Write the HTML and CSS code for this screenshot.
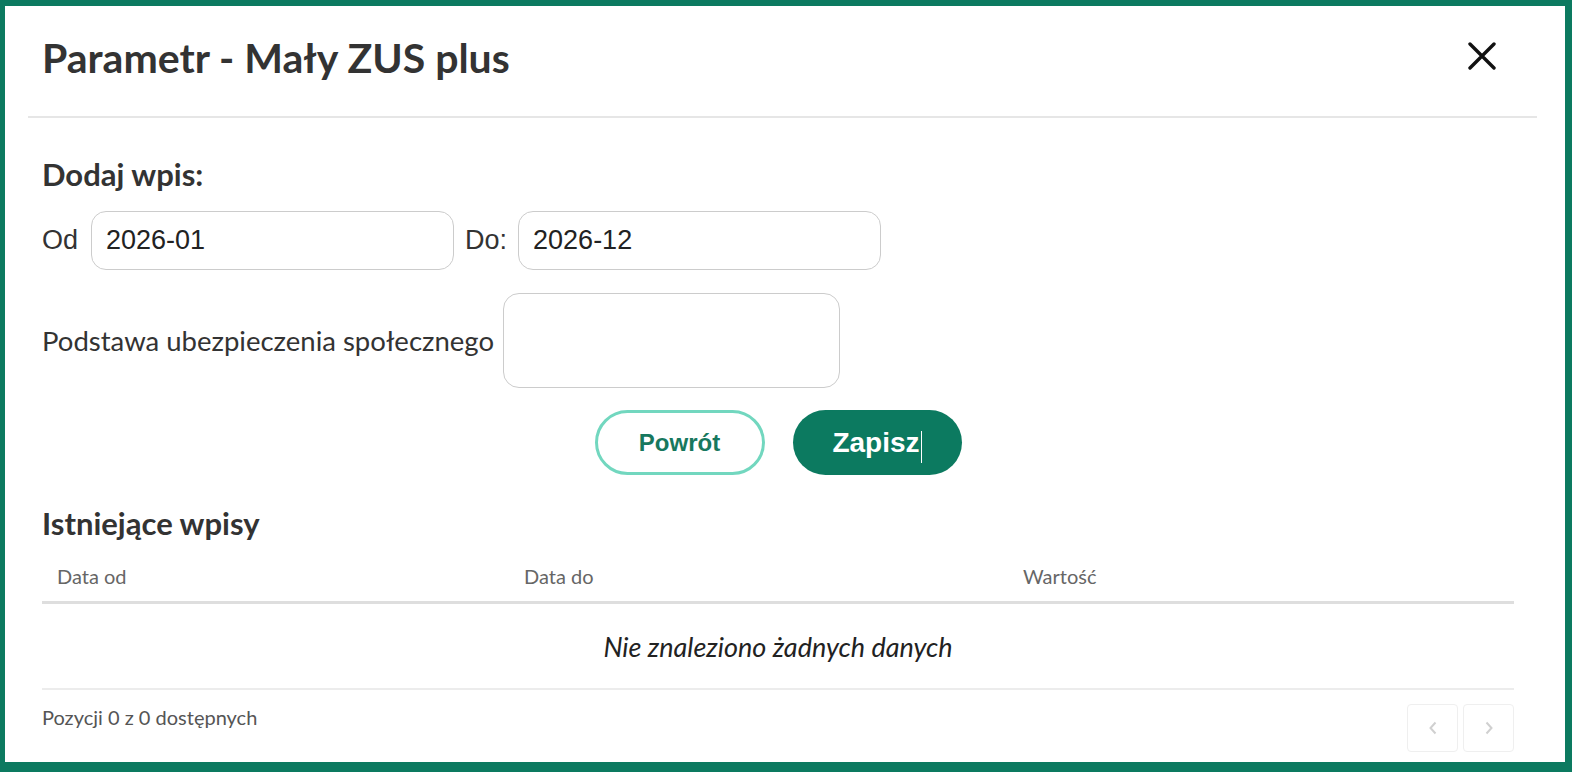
FILE: index.html
```html
<!DOCTYPE html>
<html lang="pl">
<head>
<meta charset="utf-8">
<title>Parametr - Mały ZUS plus</title>
<link rel="stylesheet" href="styles.css">
</head>
<body>
<div class="modal">
  <header class="modal-header">
    <h1 class="modal-title">Parametr - Mały ZUS plus</h1>
    <button class="close" type="button" aria-label="Zamknij">
      <svg width="30" height="28" viewBox="0 0 30 28"><path d="M3 2 L27 26 M27 2 L3 26" stroke="#111" stroke-width="3.4" stroke-linecap="round"/></svg>
    </button>
  </header>
  <div class="modal-body">
    <h2 class="section-title">Dodaj wpis:</h2>
    <div class="row">
      <label class="lbl lbl-first">Od</label>
      <input class="input date" type="text" value="2026-01">
      <label class="lbl">Do:</label>
      <input class="input date" type="text" value="2026-12">
    </div>
    <div class="row row-base">
      <label class="lbl lbl-lato">Podstawa ubezpieczenia społecznego</label>
      <input class="input tall" type="text" value="">
    </div>
    <div class="actions">
      <button class="btn btn-outline" type="button">Powrót</button>
      <button class="btn btn-primary" type="button">Zapisz<span class="caret"></span></button>
    </div>
    <h2 class="section-title existing">Istniejące wpisy</h2>
    <div class="table">
      <div class="thead">
        <div class="th">Data od</div>
        <div class="th">Data do</div>
        <div class="th">Wartość</div>
      </div>
      <div class="empty">Nie znaleziono żadnych danych</div>
    </div>
    <div class="footer">
      <span class="info">Pozycji 0 z 0 dostępnych</span>
      <div class="pager">
        <button class="page" type="button" aria-label="Poprzednia"><svg width="10" height="16" viewBox="0 0 10 16"><path d="M7.5 2.5 L2.5 8 L7.5 13.5" fill="none" stroke="#d0d0d0" stroke-width="2"/></svg></button>
        <button class="page" type="button" aria-label="Następna"><svg width="10" height="16" viewBox="0 0 10 16"><path d="M2.5 2.5 L7.5 8 L2.5 13.5" fill="none" stroke="#d0d0d0" stroke-width="2"/></svg></button>
      </div>
    </div>
  </div>
</div>
</body>
</html>
```
FILE: styles.css
```css
* { box-sizing: border-box; }
html, body { margin: 0; padding: 0; background: #fff; }
.modal {
  width: 1572px;
  height: 772px;
  border-style: solid;
  border-color: #0c7a60;
  border-width: 6px 7px 10px 5px;
  background: #fff;
  display: flex;
  flex-direction: column;
  font-family: Lato, "Liberation Sans", sans-serif;
  color: #333;
}
.modal-header {
  height: 112px;
  margin: 0 28px 0 23px;
  padding: 0 40px 0 14px;
  border-bottom: 2px solid #e6e6e6;
  display: flex;
  align-items: center;
  justify-content: space-between;
}
.modal-title {
  margin: 0;
  font-size: 41px;
  font-weight: 700;
  color: #333;
  line-height: 1;
  padding-bottom: 8px;
}
.close {
  border: 0;
  background: none;
  padding: 0;
  width: 30px;
  height: 28px;
  display: flex;
  cursor: pointer;
  margin-bottom: 10px;
}
.modal-body {
  padding: 38px 51px 0 37px;
  display: flex;
  flex-direction: column;
}
.section-title {
  margin: 0;
  font-size: 31px;
  font-weight: 700;
  line-height: 36px;
  color: #333;
}
.row {
  display: flex;
  align-items: center;
  gap: 11px;
  margin-top: 19px;
}
.row-base { margin-top: 23px; gap: 9px; }
.lbl {
  font-family: "Liberation Sans", Arial, sans-serif;
  font-size: 27px;
  color: #333;
}
.lbl-first { margin-right: 2px; }
.lbl-lato { font-family: Lato, sans-serif; font-size: 27.5px; }
.input {
  font-family: "Liberation Sans", Arial, sans-serif;
  font-size: 27px;
  color: #222;
  border: 1px solid #cccccc;
  border-radius: 15px;
  background: #fff;
  outline: none;
  padding: 0 14px;
}
.date { width: 363px; height: 59px; }
.tall { width: 337px; height: 95px; border-radius: 16px; }
.actions {
  display: flex;
  justify-content: center;
  gap: 28px;
  margin-top: 22px;
}
.btn {
  width: 170px;
  height: 65px;
  border-radius: 33px;
  font-family: "Liberation Sans", Arial, sans-serif;
  font-weight: 700;
  cursor: pointer;
  display: flex;
  align-items: center;
  justify-content: center;
}
.btn-outline {
  background: #fff;
  border: 3px solid #72d7bf;
  color: #17785e;
  font-size: 24px;
}
.btn-primary {
  background: #0c7a60;
  border: 0;
  color: #fff;
  font-size: 28px;
  width: 169px;
}
.caret {
  display: inline-block;
  width: 1px;
  height: 32px;
  background: #fff;
  margin-left: 1px;
  margin-bottom: -8px;
}
.existing { margin-top: 30px; }
.table { margin-top: 10px; }
.thead {
  display: grid;
  grid-template-columns: 467px 499px 1fr;
  border-bottom: 3px solid #dedede;
  height: 53px;
  align-items: center;
}
.th {
  padding-left: 15px;
  font-size: 20px;
  color: #666;
}
.empty {
  height: 86px;
  border-bottom: 2px solid #ececec;
  display: flex;
  align-items: center;
  justify-content: center;
  font-style: italic;
  font-size: 27px;
  color: #222;
}
.footer {
  display: flex;
  justify-content: space-between;
  align-items: flex-start;
  margin-top: 14px;
}
.info { font-size: 20px; line-height: 24px; color: #555; padding-top: 1px; }
.pager { display: flex; gap: 5px; }
.page {
  width: 51px;
  height: 48px;
  border: 1px solid #efefef;
  border-radius: 4px;
  background: #fff;
  display: flex;
  align-items: center;
  justify-content: center;
  padding: 0;
}
```
